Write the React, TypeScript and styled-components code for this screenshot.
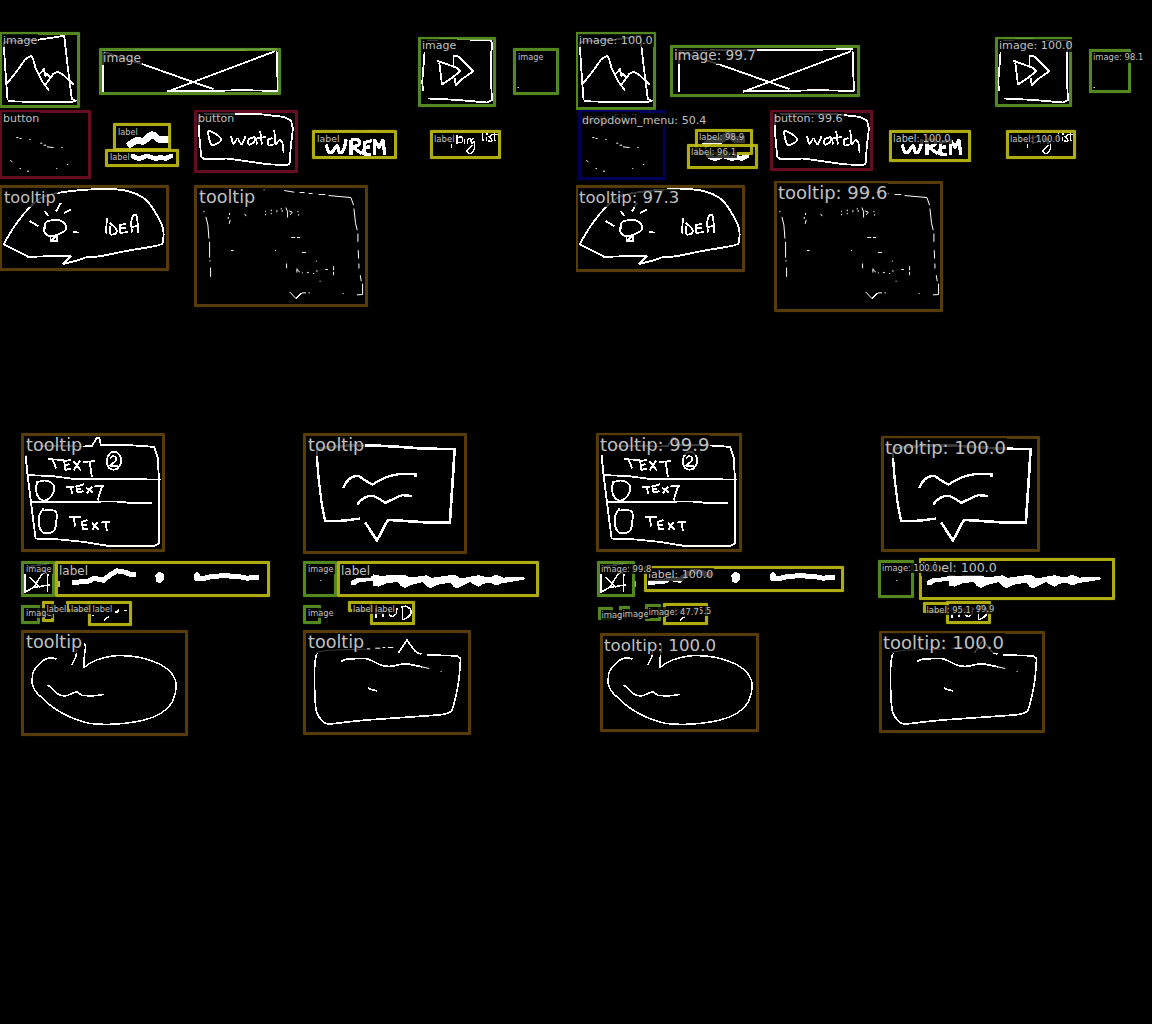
import React from "react";
import styled, { createGlobalStyle } from "styled-components";

const GlobalStyle = createGlobalStyle`
  html, body { margin: 0; padding: 0; background: #000; }
`;

const Comparison = styled.main`
  display: grid;
  grid-template-columns: repeat(2, 576px);
  width: 1152px;
  height: 1024px;
  background: #000;
`;

const Pane = styled.section`
  position: relative;
  height: 1024px;
  overflow: hidden;
`;

const Drawing = styled.svg`
  display: block;
  width: 576px;
  height: 1024px;
  fill: none;
  stroke: #fff;
  stroke-linejoin: round;
  shape-rendering: crispEdges;
`;

const tones = {
  image: "rgba(92, 150, 34, 0.9)",
  label: "rgba(190, 187, 18, 0.92)",
  button: "rgba(110, 14, 36, 0.92)",
  tooltip: "rgba(92, 64, 10, 0.94)",
  menu: "rgba(0, 0, 94, 0.94)",
};
type Tone = keyof typeof tones;
type Box = [Tone, number, number, number, number];
type Caption = [string, number, number, number];

const Region = styled.div<{ $box: Box }>`
  position: absolute;
  box-sizing: border-box;
  left: ${(p) => p.$box[1]}px;
  top: ${(p) => p.$box[2]}px;
  width: ${(p) => p.$box[3] - p.$box[1]}px;
  height: ${(p) => p.$box[4] - p.$box[2]}px;
  border: 3px solid ${(p) => tones[p.$box[0]]};
  border-radius: 1px;
  box-shadow: 0 0 1px ${(p) => tones[p.$box[0]]};
`;

const Tag = styled.span<{ $x: number; $base: number; $size: number }>`
  position: absolute;
  left: ${(p) => p.$x - 1}px;
  top: ${(p) => p.$base - 0.846 * p.$size - 1}px;
  padding: 1px;
  font: ${(p) => p.$size}px/1 "DejaVu Sans", sans-serif;
  white-space: pre;
  color: #c0c0c0;
  background: rgba(0, 0, 0, 0.78);
`;

/* Strokes are traced at three times the size of the canvas. */
const Trace = ({ x, y, w = 5.5, children }: { x: number; y: number; w?: number; children: React.ReactNode }) => (
  <g transform={`translate(${x + 0.25} ${y + 0.2}) scale(0.33333)`} strokeWidth={w}>
    {children}
  </g>
);

/* Turns a list of points into one rounded pen stroke. */
const curve = (...p: number[]) => {
  const n = p.length / 2;
  const at = (i: number) => {
    const k = Math.max(0, Math.min(n - 1, i));
    return [p[2 * k], p[2 * k + 1]];
  };
  let d = `M${p[0]} ${p[1]}`;
  for (let i = 0; i < n - 1; i++) {
    const [a, b, c, e] = [at(i - 1), at(i), at(i + 1), at(i + 2)];
    d += `C${b[0] + (c[0] - a[0]) / 6} ${b[1] + (c[1] - a[1]) / 6} ${c[0] - (e[0] - b[0]) / 6} ${c[1] - (e[1] - b[1]) / 6} ${c[0]} ${c[1]}`;
  }
  return d;
};

const Sketches = () => (
  <Drawing viewBox="0 0 576 1024">
    <Trace x={0} y={25}>
      <path d="M10 50L15 130L22 225M10 50L118 43L192 32L203 130L215 222L228 228M22 228L130 231L228 229" />
      <path d="M18 178L52 135L75 102L92 92L98 100L107 132L125 167L146 196M115 150L131 132L135 152L141 146L150 158L157 150M133 182L160 145L172 139L190 150L220 178" />
      <path d="M308 80V200M306 76L600 75L830 72M310 80L430 118L640 192M500 200L580 170L825 78M829 78L833 197M500 198H600L720 195L833 197" />
      <path d="M597 268V330L603 395L612 402L680 400L740 408L800 417L860 420L868 415L872 360L878 310L872 285L850 275L780 267H610" />
      <path d={curve(622, 316, 632, 357, 650, 355, 663, 343, 645, 325, 624, 316)} />
      <path d={curve(692, 332, 700, 356, 712, 340, 724, 358, 736, 332) + curve(765, 335, 745, 343, 746, 358, 760, 352, 766, 338, 770, 358)} />
      <path d={"M780 318L785 358M768 340L798 335" + curve(816, 338, 803, 345, 805, 360, 820, 358) + "M822 315L826 360" + curve(826, 358, 838, 345, 847, 355, 850, 382)} />
      <path strokeWidth="20" d={curve(382, 362, 410, 345, 430, 348, 455, 328, 475, 342, 505, 342)} />
      <path strokeWidth="14" strokeLinecap="round" d="M397 393L415 401L440 392L468 401L480 396L495 400L512 393" />
      <path strokeWidth="3" d="M48 337h6M58 340h6M87 343h4M120 354h6M130 360h8M140 365l20 2M183 367h4M30 405l6 5M58 430h4M80 438h6M168 430h3M200 418h4" />
    </Trace>
    <Trace x={290} y={25}>
      <path d="M403 80L400 120L396 170L398 197M410 46L455 42L600 44L607 55L602 90L603 180L605 225L590 232L500 224L414 220" />
      <path d="M440 106L500 128L510 138L485 158L455 178L452 150L447 112M490 128V92L505 94L549 138L515 162L497 180L493 158" />
      <path strokeWidth="3" d="M682 187h4" />
      <path strokeWidth="10" d={curve(108, 358, 114, 378, 126, 380, 140, 362, 148, 382, 160, 374, 168, 342) + "M182 388V343" + curve(182, 343, 205, 345, 206, 358, 188, 366) + "L215 386M246 346L223 352L221 386L242 388M221 367L240 365M252 390L253 345L266 366L278 345L284 390"} />
      <path strokeWidth="3" opacity=".7" d="M138 317h65M225 317h34" />
      <path strokeWidth="3" opacity=".5" d="M440 352l14 -3M462 335v22M470 345h12v10" />
      <path strokeWidth="4" d={"M484 356v12M500 330V357" + curve(500, 337, 515, 336, 516, 350, 502, 353) + "M523 340V356M531 356V341" + curve(531, 344, 540, 340, 544, 356) + curve(552, 340, 543, 343, 545, 355, 552, 350, 552, 372, 540, 386, 530, 376, 548, 360)} />
      <path strokeWidth="4" d={"M577 322L578 348M588 335V348M588 326h4" + curve(606, 331, 596, 334, 604, 341, 603, 348, 594, 347) + "M612 320L614 347M602 328H624V336"} />
    </Trace>
    <Trace x={0} y={180}>
      <path d={curve(172, 38, 250, 29, 345, 27, 400, 38, 440, 62, 470, 105, 488, 145, 488, 180, 475, 195, 380, 212, 300, 228, 255, 232, 240, 238, 188, 252)} />
      <path d={"M188 252L212 228L150 228L84 230L10 192" + curve(10, 192, 45, 135, 85, 85, 125, 52, 172, 38)} />
      <path d={curve(133, 145, 136, 128, 150, 121, 180, 121, 195, 133, 196, 150, 180, 160, 150, 168, 134, 158, 131, 140)} />
      <path d="M151 167H171V183H151ZM151 183L171 166M88 122L114 138M133 92L145 108M182 68L167 94M191 98L212 89M219 156L235 157" />
      <path d={"M320 113L317 160M328 138L331 164" + curve(331, 164, 346, 160, 348, 146, 328, 128) + "M378 130L358 135L360 158L382 156M358 145L378 143" + curve(395, 157, 393, 125, 400, 106, 410, 110, 414, 158) + "M393 140L412 138"} />
      <path strokeWidth="3" d="M790 29h3M852 31L882 36M898 37h15M925 40h12M955 43h20M985 46L1052 52L1060 75M1061 85L1066 130L1071 150M1073 160V185M1074 210L1075 235M1076 250v15M1080 285L1083 303M1087 310V343L1070 344M1027 340h3M611 92v4M617 110L623 135L626 175M628 185V232M629 240v4M631 262V290M688 98v6M684 110v6M690 119l-3 12M733 101l5 7M796 92v3M796 101v4M813 88v5M813 98v4M830 90v6M843 84v4M846 90v5M857 82L862 95V112M866 92L876 96L870 104M893 92v4M895 102v4M873 172h12M890 172h10M692 211h8M826 209v4M905 217h12M859 250v14M947 243h3" />
      <path strokeWidth="3" d="M890 265v12M890 268l9 8M905 278h3M920 278l6 -2M938 280h4M950 270v5M975 268h8M1000 258v12M1000 275v10M958 303h3M868 335L888 356M905 338h12M925 338h4" />
      <path d="M887 356L903 339" />
    </Trace>
    <Trace x={10} y={425}>
      <path d="M46 90L52 150L62 230L76 340L150 343L220 350L300 363H430L446 355V165L443 100L432 65L360 60H272L267 38H260L245 62L222 64L90 62M52 150L120 152L190 161L452 163M62 230L320 229L370 234H425" />
      <path d={curve(78, 172, 105, 166, 130, 180, 127, 207, 105, 226, 84, 215, 77, 185, 84, 170) + curve(100, 250, 88, 268, 86, 300, 96, 320, 115, 324, 132, 315, 138, 290, 136, 258, 98, 256)} />
      <path d={curve(292, 95, 305, 80, 325, 86, 333, 108, 320, 131, 298, 130, 290, 110, 293, 92) + curve(300, 100, 308, 93, 318, 98, 315, 108, 300, 122, 322, 122)} />
      <path d="M112 102L160 104M127 104L138 130M182 104L162 108L165 134L182 130M162 120L178 117M190 108L212 136M210 106L190 136M218 110L255 108M238 110L245 155M166 186L192 184M182 186L186 207M222 177L198 184L202 202L220 198M200 192L212 190M228 188L248 202M246 184L230 204M250 184L282 182M275 184L262 226M175 276L212 276M190 278L195 304M232 284L215 290L218 312L234 310M217 300L230 298M245 292L265 314M262 290L246 314M272 292L300 290M286 292L290 318" />
    </Trace>
    <Trace x={295} y={425} w={8}>
      <path d="M65 70L150 62L215 60L300 64L380 70L478 72L474 140L464 292H400L278 284L245 346L210 292" />
      <path strokeWidth="7" d="M65 70V95L70 160L80 240L90 288L150 286L194 280M144 188Q160 150 190 152Q215 170 232 178Q270 152 310 147L361 147V155M186 238Q205 210 235 212Q255 222 270 233Q300 218 320 210L349 212" />
      <path fill="#fff" stroke="none" d="M168 468L180 460L210 457L232 453V447L255 452L300 449L325 448L345 457L395 450L410 458L480 448L495 460L550 450L575 456L590 455L600 448L625 457L685 456L690 462L660 468L620 474L608 480L595 478L585 472L565 476L550 484L536 478L525 470L500 483L485 489L474 484L466 472L430 478L405 489L392 482L382 471L345 480L330 488L316 482L308 470L275 474L250 484L232 482V466L190 472L182 479L168 478Z" />
      <path strokeWidth="5" d="M242 548V578M258 548L264 575M242 565h16M282 552Q280 575 292 574Q305 570 305 548M322 545V584M316 545L332 543Q350 550 348 562Q345 575 322 584" />
      <path strokeWidth="3" d="M75 466h3" />
    </Trace>
    <Trace x={10} y={550} w={4.5}>
      <path d="M44 72V128M44 126L70 112L118 104M58 80L88 112M96 70L70 112M112 68V124M50 50L115 40M100 60L116 75" />
      <path strokeWidth="15" d="M186 97L225 94L238 92L250 84L280 90L300 74L320 62L345 66L360 73L377 72M552 80L575 86L600 80L640 76L690 80L710 84L746 81" />
      <path fill="#fff" stroke="none" d="M435 75L448 64L462 72L460 88L450 99L438 95ZM550 74L560 65L570 72L568 92H556Z" />
      <path d="M315 186h6L326 178M343 182l6 -3M280 211L297 198M245 196h5" />
      <path strokeWidth="4" stroke="#b9bb62" d="M146 92v18" />
      <path d="M138 327Q118 318 100 330L75 355Q64 368 66 400Q72 425 92 440Q150 500 240 520Q320 528 400 510Q460 495 485 458Q498 430 498 400Q490 360 440 338Q380 312 310 317Q250 325 222 352V320L226 290L222 278M200 300L196 322L184 345M110 405L118 408L140 430Q155 440 172 436L198 424L215 435L240 438L282 433" />
    </Trace>
    <Trace x={295} y={595} w={5}>
      <path d={"M68 170L64 175" + curve(64, 175, 58, 220, 62, 340, 80, 375, 100, 386, 160, 380, 220, 374, 350, 365, 440, 358, 465, 350, 475, 330, 490, 260, 496, 190) + "L485 182L395 179" + curve(378, 177, 360, 168, 335, 134) + "L310 173"} />
      <path d={curve(138, 199, 150, 193, 170, 191, 215, 191, 260, 211, 290, 213, 330, 206, 380, 215) + "M218 278L228 283L245 287"} />
      <path strokeWidth="3" d="M68 170L100 165L210 162M215 161h10M240 159h15M262 157h8M278 157h16M380 215L402 220M436 229h3" />
    </Trace>
  </Drawing>
);

const truthBoxes: Box[] = [
  ["image", -1, 32, 80, 108],
  ["image", 99, 48, 281, 95],
  ["image", 418, 37, 496, 107],
  ["image", 513, 48, 559, 95],
  ["button", -1, 110, 91, 179],
  ["label", 113, 123, 171, 151],
  ["label", 105, 149, 179, 167],
  ["button", 194, 110, 298, 173],
  ["label", 312, 130, 397, 159],
  ["label", 430, 130, 501, 159],
  ["tooltip", -1, 185, 169, 271],
  ["tooltip", 194, 185, 368, 307],
  ["tooltip", 21, 433, 165, 552],
  ["tooltip", 303, 433, 467, 554],
  ["image", 21, 561, 55, 597],
  ["label", 55, 561, 270, 597],
  ["image", 303, 561, 337, 597],
  ["label", 337, 561, 539, 597],
  ["image", 21, 605, 40, 624],
  ["label", 42, 601, 54, 622],
  ["label", 66, 601, 89, 612],
  ["label", 88, 601, 132, 626],
  ["image", 303, 605, 321, 624],
  ["label", 348, 601, 372, 612],
  ["label", 370, 601, 415, 625],
  ["tooltip", 21, 630, 188, 736],
  ["tooltip", 303, 630, 471, 735],
];

const truthTags: Caption[] = [
  ["image", 3, 44, 11],
  ["image", 103, 62, 12.2],
  ["image", 422, 49, 11],
  ["image", 518, 59.5, 8.2],
  ["button", 3, 122, 11],
  ["label", 118, 134.5, 8.2],
  ["label", 110, 160, 8.2],
  ["button", 198, 122, 11],
  ["label", 317, 142, 9.3],
  ["label", 434, 142, 8.5],
  ["tooltip", 4, 204, 16.2],
  ["tooltip", 199, 204, 17.6],
  ["tooltip", 26, 452, 17.6],
  ["tooltip", 308, 452, 17.6],
  ["image", 26, 572, 8.2],
  ["label", 59, 575, 12],
  ["image", 308, 572, 8.2],
  ["label", 341, 575, 12],
  ["image", 26, 616, 8.2],
  ["label", 46.5, 612, 8.2],
  ["label", 71, 612, 8.2],
  ["label", 92.5, 612, 8.2],
  ["image", 308, 616, 8.2],
  ["label", 353, 612, 8.2],
  ["label", 375, 612, 8.2],
  ["tooltip", 26, 649, 17.6],
  ["tooltip", 308, 649, 17.6],
];

const predictedBoxes: Box[] = [
  ["image", -1, 32, 80, 110],
  ["image", 94, 45, 284, 97],
  ["image", 419, 37, 496, 107],
  ["image", 513, 49, 555, 93],
  ["menu", 2, 110, 90, 180],
  ["label", 119, 129, 177, 155],
  ["label", 111, 144, 182, 169],
  ["button", 194, 110, 297, 171],
  ["label", 313, 130, 395, 162],
  ["label", 430, 130, 500, 159],
  ["tooltip", -1, 185, 169, 272],
  ["tooltip", 198, 181, 367, 312],
  ["tooltip", 20, 433, 166, 552],
  ["tooltip", 305, 436, 464, 552],
  ["image", 21, 561, 59, 597],
  ["label", 68, 566, 268, 592],
  ["image", 302, 560, 338, 598],
  ["label", 343, 558, 539, 600],
  ["image", 22, 607, 37, 620],
  ["image", 43, 606, 54, 618],
  ["image", 69, 604, 85, 621],
  ["label", 87, 603, 132, 625],
  ["label", 347, 602, 372, 613],
  ["label", 370, 601, 415, 624],
  ["tooltip", 24, 633, 183, 732],
  ["tooltip", 303, 631, 469, 733],
];

const predictedTags: Caption[] = [
  ["image: 100.0", 3, 44, 11.1],
  ["image: 99.7", 98, 61, 13.7],
  ["image: 100.0", 423, 49, 11.1],
  ["image: 98.1", 517, 60.5, 8.4],
  ["card: 58.7", 6, 122, 11],
  ["dropdown_menu: 50.4", 6, 124, 11.1],
  ["label: 98.9", 123, 140.5, 8.5],
  ["label: 96.1", 115, 155.5, 8.5],
  ["button: 99.6", 198, 122, 11.1],
  ["label: 100.0", 317, 142, 9.7],
  ["label: 100.0", 434, 142, 8.5],
  ["tooltip: 97.3", 3, 203.6, 16.5],
  ["tooltip: 99.6", 202, 199.6, 18],
  ["tooltip: 99.9", 24, 451.6, 18],
  ["tooltip: 100.0", 309, 454.6, 18],
  ["label: 100.0", 72, 578, 11],
  ["image: 99.8", 25, 572, 8.4],
  ["label: 100.0", 346, 573, 12.6],
  ["image: 100.0", 306, 571, 8.4],
  ["image", 25.5, 618, 8.4],
  ["image", 46.5, 617, 8.4],
  ["label: 65.5", 91, 614, 8.4],
  ["image: 47.7", 72.5, 615, 8.4],
  ["label: 99.9", 374, 612, 8.4],
  ["label: 95.1", 350.5, 613, 8.4],
  ["tooltip: 100.0", 28, 651.6, 16.7],
  ["tooltip: 100.0", 307, 649.6, 18],
];

const AnnotatedPane = ({ boxes, tags }: { boxes: Box[]; tags: Caption[] }) => (
  <Pane>
    <Sketches />
    {boxes.map((box, i) => (
      <Region key={i} $box={box} />
    ))}
    {tags.map(([text, x, base, size], i) => (
      <Tag key={i} $x={x} $base={base} $size={size}>
        {text}
      </Tag>
    ))}
  </Pane>
);

export default function App() {
  return (
    <>
      <GlobalStyle />
      <Comparison>
        <AnnotatedPane boxes={truthBoxes} tags={truthTags} />
        <AnnotatedPane boxes={predictedBoxes} tags={predictedTags} />
      </Comparison>
    </>
  );
}
